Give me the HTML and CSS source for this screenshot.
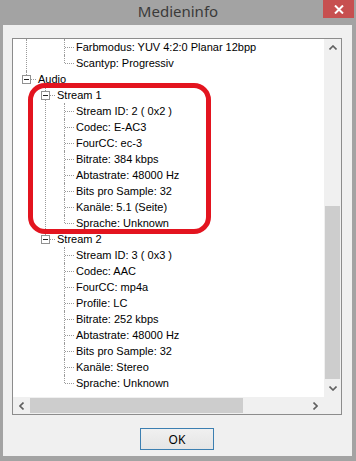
FILE: index.html
```html
<!DOCTYPE html>
<html lang="de">
<head>
  <meta charset="UTF-8">
  <meta name="viewport" content="width=device-width, initial-scale=1.0">
  <title>Medieninfo</title>
  <link rel="stylesheet" href="styles.css">
</head>
<body>

  <div class="window">

    <!-- Title bar -->
    <div class="titlebar">
      <span></span>
      <span class="title">Medieninfo</span>
      <button class="close" aria-label="Schließen">
        <svg width="10" height="9" viewBox="0 0 10 9"><path d="M1 0.5 L9 8.5 M9 0.5 L1 8.5" stroke="#fff" stroke-width="2"/></svg>
      </button>
    </div>

    <div class="client">

      <!-- Tree with scrollbars -->
      <div class="tree-box">
        <div class="tree-view">
          <ul class="tree">
            <!-- video node, scrolled out above -->
            <li class="continued">
              <ul>
                <li class="continued">
                  <ul>
                    <li><div class="row">Farbmodus: YUV 4:2:0 Planar 12bpp</div></li>
                    <li><div class="row">Scantyp: Progressiv</div></li>
                  </ul>
                </li>
              </ul>
            </li>
            <li>
              <div class="row"><span class="toggle"></span>Audio</div>
              <ul>
                <li>
                  <div class="row"><span class="toggle"></span>Stream 1</div>
                  <ul>
                    <li><div class="row">Stream ID: 2 ( 0x2 )</div></li>
                    <li><div class="row">Codec: E-AC3</div></li>
                    <li><div class="row">FourCC: ec-3</div></li>
                    <li><div class="row">Bitrate: 384 kbps</div></li>
                    <li><div class="row">Abtastrate: 48000 Hz</div></li>
                    <li><div class="row">Bits pro Sample: 32</div></li>
                    <li><div class="row">Kanäle: 5.1 (Seite)</div></li>
                    <li><div class="row">Sprache: Unknown</div></li>
                  </ul>
                </li>
                <li>
                  <div class="row"><span class="toggle"></span>Stream 2</div>
                  <ul>
                    <li><div class="row">Stream ID: 3 ( 0x3 )</div></li>
                    <li><div class="row">Codec: AAC</div></li>
                    <li><div class="row">FourCC: mp4a</div></li>
                    <li><div class="row">Profile: LC</div></li>
                    <li><div class="row">Bitrate: 252 kbps</div></li>
                    <li><div class="row">Abtastrate: 48000 Hz</div></li>
                    <li><div class="row">Bits pro Sample: 32</div></li>
                    <li><div class="row">Kanäle: Stereo</div></li>
                    <li><div class="row">Sprache: Unknown</div></li>
                  </ul>
                </li>
              </ul>
            </li>
          </ul>

          <!-- Red marker drawn over the first audio stream -->
          <div class="marker"></div>
        </div>

        <div class="vscroll">
          <span class="sb-btn">
            <svg width="8" height="5" viewBox="0 0 8 5"><path d="M0.5 4.5 L4 1 L7.5 4.5" fill="none" stroke="#606060" stroke-width="1.6"/></svg>
          </span>
          <div class="sb-track vertical"><div class="thumb"></div></div>
          <span class="sb-btn">
            <svg width="8" height="5" viewBox="0 0 8 5"><path d="M0.5 0.5 L4 4 L7.5 0.5" fill="none" stroke="#606060" stroke-width="1.6"/></svg>
          </span>
        </div>

        <div class="hscroll">
          <span class="sb-btn">
            <svg width="5" height="8" viewBox="0 0 5 8"><path d="M4.5 0.5 L1 4 L4.5 7.5" fill="none" stroke="#606060" stroke-width="1.6"/></svg>
          </span>
          <div class="sb-track horizontal"><div class="thumb"></div></div>
          <span class="sb-btn">
            <svg width="5" height="8" viewBox="0 0 5 8"><path d="M0.5 0.5 L4 4 L0.5 7.5" fill="none" stroke="#606060" stroke-width="1.6"/></svg>
          </span>
        </div>

        <div class="corner"></div>
      </div>

      <!-- Dialog buttons -->
      <div class="buttons">
        <button class="ok">OK</button>
      </div>

    </div>
  </div>

</body>
</html>
```

FILE: styles.css
```css
/* General */
body {
  margin: 0;
  background: #a3a3a3;
  font-family: "Liberation Sans", Arial, sans-serif;
  font-size: 11px;
  color: #000000;
}

.window {
  width: 356px;
  height: 461px;
  display: flex;
  flex-direction: column;
}

/* Title bar */
.titlebar {
  height: 25px;
  display: grid;
  grid-template-columns: 1fr auto 1fr;
  align-items: start;
}

.title {
  font-family: "Noto Sans", "Open Sans", sans-serif;
  font-size: 15px;
  line-height: 23px;
  color: #3a3a3a;
}

.close {
  justify-self: end;
  margin-right: 2px;
  width: 31px;
  height: 18px;
  padding: 0;
  border: none;
  background: #c75050;
  display: flex;
  align-items: center;
  justify-content: center;
}

/* Client area */
.client {
  flex: 1;
  margin: 0 4px 5px 3px;
  padding: 13px 10px 0 9px;
  background: #f0f0f0;
  display: flex;
  flex-direction: column;
}

.tree-box {
  height: 377px;
  box-sizing: border-box;
  border: 1px solid #8c8c8c;
  background: #ffffff;
  display: grid;
  grid-template-columns: 1fr 17px;
  grid-template-rows: 1fr 17px;
}

.tree-view {
  position: relative;
  overflow: hidden;
}

/* Tree */
.tree,
.tree ul {
  list-style: none;
  margin: 0;
  padding: 0;
}

.tree ul {
  padding-left: 19px;
}

.tree li {
  position: relative;
}

.tree li::before {
  content: "";
  position: absolute;
  left: 13px;
  top: 0;
  bottom: 0;
  border-left: 1px dotted #9a9a9a;
}

.tree li:last-child::before {
  bottom: auto;
  height: 8px;
}

.tree li::after {
  content: "";
  position: absolute;
  left: 14px;
  top: 8px;
  width: 9px;
  border-top: 1px dotted #9a9a9a;
}

/* nodes whose own row is scrolled out of view */
.tree .continued::after,
.tree .continued .continued::before {
  display: none;
}

.row {
  height: 16px;
  line-height: 16px;
  padding-left: 25px;
  display: flex;
  white-space: nowrap;
}

.row:has(.toggle) {
  padding-left: 9px;
}

.toggle {
  position: relative;
  z-index: 1;
  width: 9px;
  height: 9px;
  box-sizing: border-box;
  margin: 4px 7px 0 0;
  border: 1px solid #919191;
  background: linear-gradient(#222222, #222222) center / 5px 1px no-repeat, #ffffff;
}

/* Annotation */
.marker {
  position: absolute;
  left: 15px;
  top: 44px;
  width: 183px;
  height: 151px;
  box-sizing: border-box;
  border: 5px solid #e3141f;
  border-radius: 17px;
}

/* Scrollbars */
.vscroll,
.hscroll {
  background: #f0f0f0;
  display: flex;
}

.vscroll {
  flex-direction: column;
}

.sb-btn {
  width: 17px;
  height: 17px;
  flex: none;
  display: flex;
  align-items: center;
  justify-content: center;
}

.sb-track {
  flex: 1;
  display: flex;
}

.sb-track.vertical {
  flex-direction: column;
  padding: 150px 0 1px;
}

.sb-track.horizontal {
  padding: 1px 0;
}

.vscroll .thumb {
  flex: 1;
  margin: 0 1px;
  background: #cdcdcd;
}

.hscroll .thumb {
  width: 213px;
  background: #cdcdcd;
}

.corner {
  background: #f0f0f0;
}

/* Buttons */
.buttons {
  padding-top: 13px;
  display: flex;
  justify-content: center;
}

.ok {
  width: 74px;
  height: 22px;
  padding: 0;
  border: 1px solid #3c7fb1;
  background: linear-gradient(#f0f0f0, #e5e5e5);
  font-family: "Noto Sans", "Open Sans", sans-serif;
  font-size: 12px;
  color: #000000;
}
```
